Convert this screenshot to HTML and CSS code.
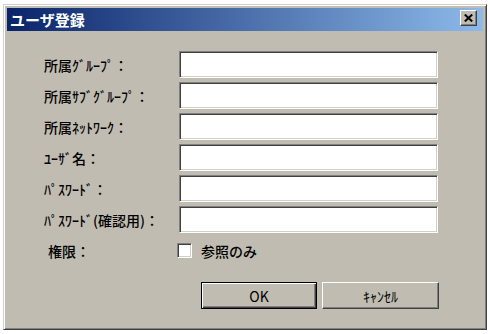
FILE: index.html
```html
<!DOCTYPE html>
<html lang="ja">
<head>
    <meta charset="UTF-8">
    <meta name="viewport" content="width=device-width, initial-scale=1.0">
    <title>ユーザ登録</title>
    <link rel="stylesheet" href="styles.css">
</head>
<body>
    <div class="dialog">
        <div class="dialog-title">
            <span class="dialog-caption">ユーザ登録</span>
            <button class="close-btn" aria-label="閉じる">
                <svg width="9" height="8" viewBox="0 0 9 8">
                    <path d="M0.8 0.6 L8.2 7.4 M8.2 0.6 L0.8 7.4" stroke="#000" stroke-width="2.1" fill="none"/>
                </svg>
            </button>
        </div>

        <div class="dialog-body">
            <div class="form-grid">
                <label class="field-label" for="group">所属ｸﾞﾙｰﾌﾟ：</label>
                <input class="field-input" type="text" id="group">

                <label class="field-label" for="subgroup">所属ｻﾌﾞｸﾞﾙｰﾌﾟ：</label>
                <input class="field-input" type="text" id="subgroup">

                <label class="field-label" for="network">所属ﾈｯﾄﾜｰｸ：</label>
                <input class="field-input" type="text" id="network">

                <label class="field-label" for="username">ﾕｰｻﾞ名：</label>
                <input class="field-input" type="text" id="username">

                <label class="field-label" for="password">ﾊﾟｽﾜｰﾄﾞ：</label>
                <input class="field-input" type="password" id="password">

                <label class="field-label" for="password2">ﾊﾟｽﾜｰﾄﾞ(確認用)：</label>
                <input class="field-input" type="password" id="password2">

                <span class="field-label perm-label">権限：</span>
                <label class="check">
                    <span class="check-box"></span>
                    <span>参照のみ</span>
                </label>
            </div>

            <div class="dialog-buttons">
                <button class="win-btn default">OK</button>
                <button class="win-btn">ｷｬﾝｾﾙ</button>
            </div>
        </div>
    </div>
</body>
</html>
```

FILE: styles.css
```css
:root {
    --face: #c0bcb1;
    --light: #d4d0c8;
    --shadow: #808080;
    --dark: #404040;
    --title-from: #0a246a;
    --title-to: #8cbaea;
}

* {
    margin: 0;
    padding: 0;
    box-sizing: border-box;
    font-family: "Noto Sans CJK JP", "Noto Sans", sans-serif;
}

body {
    background-color: #fff;
    padding: 4px 0 0 3px;
}

.dialog {
    width: 484px;
    height: 326px;
    background-color: var(--face);
    border: 1px solid;
    border-color: var(--light) var(--dark) var(--dark) var(--light);
    box-shadow: inset 1px 1px #fff, inset -1px -1px var(--shadow);
    padding: 3px;
}

.dialog-title {
    height: 23px;
    display: flex;
    justify-content: space-between;
    align-items: flex-start;
    background: linear-gradient(to right, var(--title-from), var(--title-to));
    color: #fff;
    padding: 0 6px 0 3px;
}

.dialog-caption {
    font-size: 15px;
    font-weight: 700;
    line-height: 23px;
}

.close-btn {
    width: 17px;
    height: 16px;
    margin-top: 2px;
    display: flex;
    align-items: center;
    justify-content: center;
    background-color: var(--face);
    border: 1px solid;
    border-color: #fff var(--dark) var(--dark) #fff;
    box-shadow: inset -1px -1px var(--shadow);
}

.dialog-body {
    padding: 20px 0 0 37px;
}

.form-grid {
    display: grid;
    grid-template-columns: 135px 259px;
    grid-auto-rows: 27px;
    row-gap: 4px;
}

.field-label {
    align-self: center;
    font-size: 14px;
    font-weight: 500;
    color: #000;
    white-space: nowrap;
}

.perm-label {
    padding-left: 4px;
}

.field-input {
    height: 27px;
    background-color: #fff;
    border: 1px solid;
    border-color: var(--shadow) #fff #fff var(--shadow);
    box-shadow: inset 1px 1px var(--dark), inset -1px -1px var(--light);
    outline: none;
    padding: 2px 4px;
    font-size: 13px;
}

.check {
    display: flex;
    align-items: center;
    gap: 9px;
    margin-left: -2px;
    font-size: 14px;
    font-weight: 500;
    color: #000;
}

.check-box {
    width: 15px;
    height: 15px;
    background-color: #fff;
    border: 1px solid;
    border-color: var(--shadow) #fff #fff var(--shadow);
    box-shadow: inset 1px 1px var(--dark), inset -1px -1px var(--light);
}

.dialog-buttons {
    width: 395px;
    margin-top: 18px;
    display: flex;
    justify-content: flex-end;
    gap: 5px;
}

.win-btn {
    width: 117px;
    height: 27px;
    background-color: var(--face);
    border: 1px solid;
    border-color: #fff var(--dark) var(--dark) #fff;
    box-shadow: inset -1px -1px var(--shadow);
    font-size: 14px;
    font-weight: 400;
    color: #000;
}

.win-btn.default {
    width: 116px;
    border: 1px solid #000;
    box-shadow: inset 1px 1px #fff, inset -1px -1px var(--dark), inset -2px -2px var(--shadow);
}
```
